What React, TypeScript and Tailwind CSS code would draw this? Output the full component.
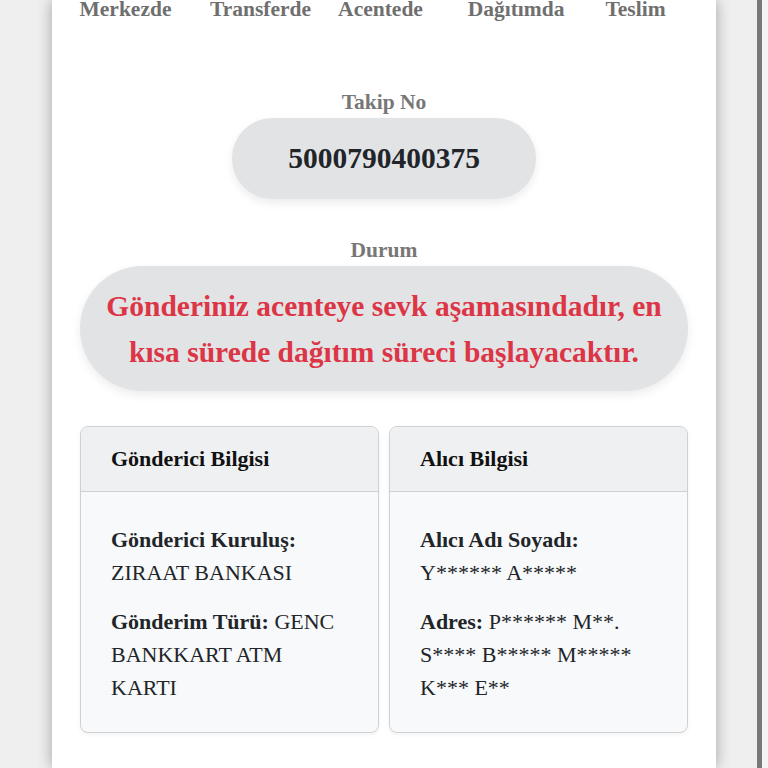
import React from "react";

const statuses = ["Merkezde", "Transferde", "Acentede", "Dağıtımda", "Teslim"];

function Card({ title, children }: { title: string; children: React.ReactNode }) {
  return (
    <div className="flex flex-col rounded-[8px] border-[1.5px] border-[#cfd0d2] bg-[#f8f9fa] overflow-hidden shadow-[0_2px_4px_rgba(0,0,0,0.05)]">
      <div className="bg-[#eff0f2] border-b-[1.5px] border-[#cfd0d2] px-[30px] py-[15.5px] text-[22px] leading-[33px] font-bold text-[#111]">
        {title}
      </div>
      <div className="flex-1 px-[30px] pt-[31px] pb-[28px] text-[22px] leading-[33px] text-[#212529]">
        {children}
      </div>
    </div>
  );
}

export default function App() {
  return (
    <div className="w-[768px] h-[768px] overflow-hidden bg-[#efefef] flex font-[family-name:'Liberation_Serif',serif]">
      <div className="ml-[52px] w-[664px] shrink-0 bg-white shadow-[0_0_14px_rgba(0,0,0,0.32)]">
        <div className="mt-[-7px] grid grid-cols-[147px_123px_117px_154px_85px] text-[21.5px] leading-[32px] font-bold text-[#6f6f6f]">
          {statuses.map((s) => (
            <div key={s} className="text-center whitespace-nowrap">
              {s}
            </div>
          ))}
        </div>

        <div className="px-[28px]">
          <div className="mt-[60.5px] text-center text-[21.5px] leading-[32px] font-bold text-[#777]">
            Takip No
          </div>
          <div className="mx-auto w-fit rounded-full bg-[#e2e3e5] px-14 py-[17.5px] text-[29.5px] leading-[46px] font-bold text-[#212529] shadow-[0_4px_10px_rgba(0,0,0,0.08)]">
            5000790400375
          </div>

          <div className="mt-[35.5px] text-center text-[21.5px] leading-[32px] font-bold text-[#777]">
            Durum
          </div>
          <div className="rounded-full bg-[#e2e3e5] px-6 py-[16.5px] text-center text-[29.5px] leading-[46px] font-bold text-[#dc3545] shadow-[0_4px_10px_rgba(0,0,0,0.08)]">
            Gönderiniz acenteye sevk aşamasındadır, en kısa sürede dağıtım süreci başlayacaktır.
          </div>

          <div className="mt-[34.5px] grid grid-cols-2 gap-[10px]">
            <Card title="Gönderici Bilgisi">
              <p className="mb-4">
                <span className="font-bold">Gönderici Kuruluş:</span> ZIRAAT BANKASI
              </p>
              <p>
                <span className="font-bold">Gönderim Türü:</span> GENC BANKKART ATM KARTI
              </p>
            </Card>
            <Card title="Alıcı Bilgisi">
              <p className="mb-4">
                <span className="font-bold">Alıcı Adı Soyadı:</span> Y****** A*****
              </p>
              <p>
                <span className="font-bold">Adres:</span> P****** M**. S**** B***** M***** K*** E**
              </p>
            </Card>
          </div>
          <div className="h-[40px]" />
        </div>
      </div>
      <div className="flex-1" />
      <div className="w-[5px] bg-[#787878]" />
      <div className="w-[6px] bg-[#f4f4f4]" />
    </div>
  );
}
